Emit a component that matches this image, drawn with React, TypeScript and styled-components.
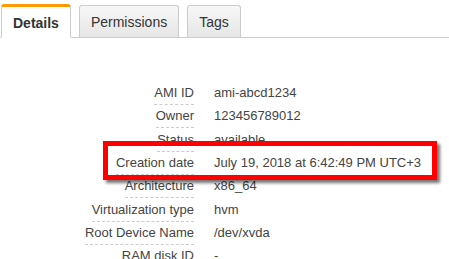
import { Fragment } from 'react';
import styled, { createGlobalStyle } from 'styled-components';

const GlobalStyle = createGlobalStyle`
  html, body {
    margin: 0;
    padding: 0;
    background: #ffffff;
  }
  body {
    font-family: 'Liberation Sans', Arial, sans-serif;
    color: #444444;
  }
`;

const Page = styled.div`
  position: relative;
  width: 449px;
  height: 259px;
  overflow: hidden;
  background: #ffffff;
`;

const TabBar = styled.div`
  display: flex;
  align-items: flex-end;
  gap: 8px;
  height: 37px;
  padding-left: 1px;
  border-bottom: 1px solid #cccccc;
`;

const Tab = styled.div<{ $active?: boolean }>`
  display: flex;
  align-items: center;
  justify-content: center;
  box-sizing: border-box;
  height: ${({ $active }) => ($active ? '34px' : '32px')};
  padding: 1px 11px 0;
  margin-bottom: ${({ $active }) => ($active ? '-1px' : '0')};
  font-size: 14px;
  font-weight: ${({ $active }) => ($active ? 'bold' : 'normal')};
  color: #333333;
  border: 1px solid #cccccc;
  border-bottom: ${({ $active }) => ($active ? '1px solid #ffffff' : 'none')};
  border-top: ${({ $active }) => ($active ? '3px solid #f90' : '1px solid #cccccc')};
  border-radius: 3px 3px 0 0;
  background: ${({ $active }) =>
    $active ? '#ffffff' : 'linear-gradient(#f7f7f7, #e6e6e6)'};
`;

const Details = styled.div`
  display: grid;
  grid-template-columns: 194px 1fr;
  column-gap: 20px;
  padding-top: 47px;
  font-size: 13px;
`;

const Label = styled.div`
  height: 23.33px;
  text-align: right;
`;

const LabelText = styled.span`
  display: inline-block;
  line-height: 16px;
  padding-bottom: 3px;
  border-bottom: 1px dashed #cccccc;
`;

const Value = styled.div`
  height: 23.33px;
  line-height: 16px;
  color: #444444;
`;

const Highlight = styled.div`
  position: absolute;
  left: 103px;
  top: 141px;
  width: 334px;
  height: 39px;
  box-sizing: border-box;
  border: 5px solid #ff0000;
  box-shadow: 3px 3px 3px rgba(0, 0, 0, 0.55);
`;

const rows: [string, string][] = [
  ['AMI ID', 'ami-abcd1234'],
  ['Owner', '123456789012'],
  ['Status', 'available'],
  ['Creation date', 'July 19, 2018 at 6:42:49 PM UTC+3'],
  ['Architecture', 'x86_64'],
  ['Virtualization type', 'hvm'],
  ['Root Device Name', '/dev/xvda'],
  ['RAM disk ID', '-'],
];

export default function App() {
  return (
    <Page>
      <GlobalStyle />
      <TabBar>
        <Tab $active>Details</Tab>
        <Tab>Permissions</Tab>
        <Tab>Tags</Tab>
      </TabBar>
      <Details>
        {rows.map(([label, value]) => (
          <Fragment key={label}>
            <Label>
              <LabelText>{label}</LabelText>
            </Label>
            <Value>{value}</Value>
          </Fragment>
        ))}
      </Details>
      <Highlight />
    </Page>
  );
}
